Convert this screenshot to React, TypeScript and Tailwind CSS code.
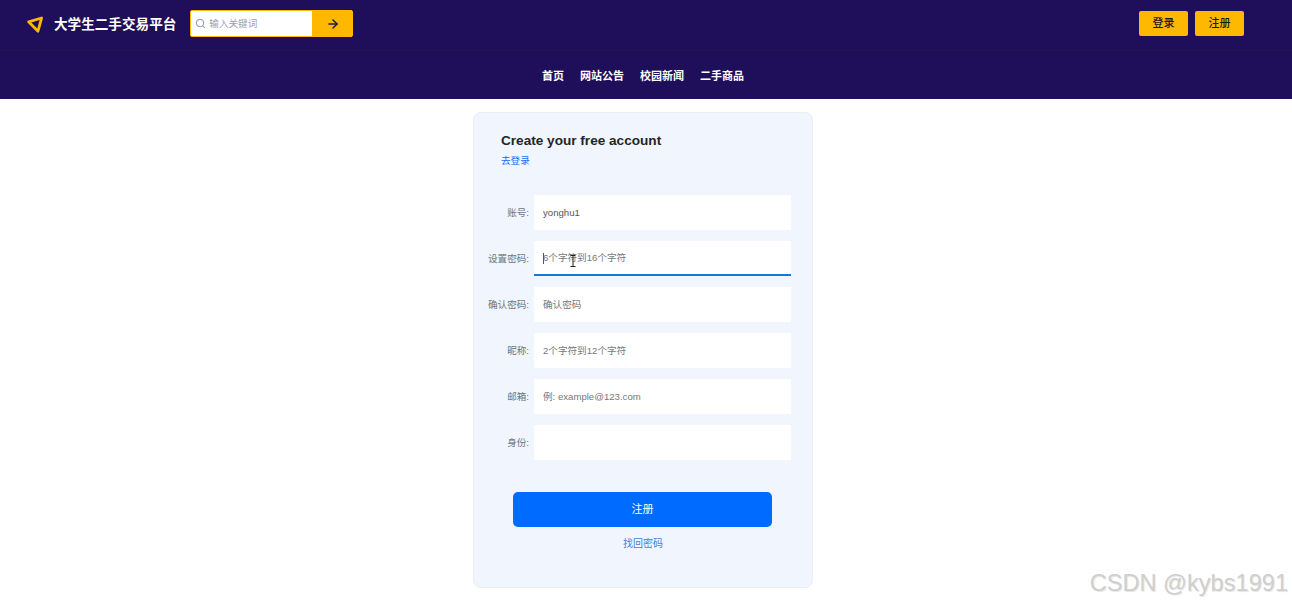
import { ArrowRight, Search } from "lucide-react";

const fields = [
  { label: "账号:", value: "yonghu1" },
  { label: "设置密码:", placeholder: "6个字符到16个字符", active: true },
  { label: "确认密码:", placeholder: "确认密码" },
  { label: "昵称:", placeholder: "2个字符到12个字符" },
  { label: "邮箱:", placeholder: "例: example@123.com" },
  { label: "身份:", placeholder: "" },
];

const navLinks = ["首页", "网站公告", "校园新闻", "二手商品"];

function Logo() {
  return (
    <svg width="18" height="18" viewBox="0 0 18 18" fill="none" className="shrink-0">
      <path d="M2.6 5.8 L15.6 2 L12 15.2 Z" stroke="#ffb800" strokeWidth="2.8" strokeLinejoin="round" />
      <path d="M7.8 7.2 L11.8 6 L10.8 9.8 Z" fill="#1f0e5a" stroke="#1f0e5a" strokeWidth="0.5" strokeLinejoin="round" />
    </svg>
  );
}

export default function App() {
  return (
    <div className="relative h-[604px] overflow-hidden bg-white font-['Liberation_Sans','Noto_Sans_CJK_SC',sans-serif]">
      <header className="bg-[#1f0e5a]">
        <div className="flex h-[51px] items-start border-b border-[#1d1a4a] pl-[26px] pr-[48px] pt-[10px]">
          <div className="mt-[6px]">
            <Logo />
          </div>
          <span className="ml-[10px] mt-[5px] text-[13.6px] leading-[20px] font-bold text-white">大学生二手交易平台</span>
          <div className="ml-[14px] flex h-[27px] w-[163px] overflow-hidden rounded-[2px] border border-[#ffb800] bg-white">
            <div className="flex flex-1 items-center gap-[3px] pl-[4px]">
              <Search size={11} strokeWidth={2.4} className="text-gray-400" />
              <span className="pt-[1px] text-[9.6px] text-gray-400">输入关键词</span>
            </div>
            <div className="flex w-[40px] items-center justify-center bg-[#ffb800] pl-[2px]">
              <ArrowRight size={14} strokeWidth={2.5} className="text-[#1f1a4a]" />
            </div>
          </div>
          <div className="ml-auto flex gap-[7px] pt-[1px]">
            <button className="h-[25px] w-[49px] rounded-[2px] bg-[#ffb800] text-[11px] font-medium text-[#1a1a1a]">登录</button>
            <button className="h-[25px] w-[49px] rounded-[2px] bg-[#ffb800] text-[11px] font-medium text-[#1a1a1a]">注册</button>
          </div>
        </div>
        <nav className="flex h-[48px] items-center justify-center gap-[16px] pr-[6px] pt-[2px]">
          {navLinks.map((link) => (
            <a key={link} className="text-[11px] font-bold text-white">
              {link}
            </a>
          ))}
        </nav>
      </header>

      <main className="flex justify-center pr-[6px] pt-[13px]">
        <div className="h-[476px] w-[340px] rounded-[8px] border border-[#e8edf8] bg-[#f1f5fe] pt-[18px]">
          <div className="pl-[27px]">
            <h1 className="text-[13.6px] leading-[20px] font-bold text-[#212529]">Create your free account</h1>
            <a className="mt-[3px] block text-[9.6px] leading-[14px] text-[#0d6efd]">去登录</a>
          </div>

          <form className="mt-[27px] flex flex-col gap-[11px]">
            {fields.map((field) => (
              <div key={field.label} className="flex items-center">
                <label className="w-[55px] shrink-0 pt-[1px] text-right text-[9.6px] text-[#6c757d]">{field.label}</label>
                <div
                  className={`relative ml-[5px] flex h-[35px] w-[257px] items-center bg-white pl-[9px] text-[9.6px] ${
                    field.active ? "border-b-2 border-[#1976d2]" : ""
                  }`}
                >
                  {field.active && <span className="absolute left-[9px] top-[12px] h-[11px] w-px bg-[#555]" />}
                  <span className={`pt-[1px] ${field.value ? "text-[#555]" : "text-[#777]"}`}>{field.value ?? field.placeholder}</span>
                  {field.active && (
                    <svg width="6" height="12" viewBox="0 0 6 12" className="absolute left-[36px] top-[14px]">
                      <path d="M0.5 0.5H5.5M3 0.5V11.5M0.5 11.5H5.5" stroke="#222" strokeWidth="1" fill="none" />
                    </svg>
                  )}
                </div>
              </div>
            ))}
          </form>

          <div className="mt-[32px] flex flex-col items-center">
            <button className="ml-[-1px] h-[35px] w-[259px] rounded-[5px] bg-[#006cff] text-[11px] text-white">注册</button>
            <a className="mt-[10px] text-[10px] leading-[14px] text-[#3d7fe0]">找回密码</a>
          </div>
        </div>
      </main>

      <div className="absolute bottom-[6px] right-[4px] text-[23.6px] leading-[30px] text-[#cfcfcf] [text-shadow:1px_1px_1px_#e4e4e4]">CSDN @kybs1991</div>
    </div>
  );
}
